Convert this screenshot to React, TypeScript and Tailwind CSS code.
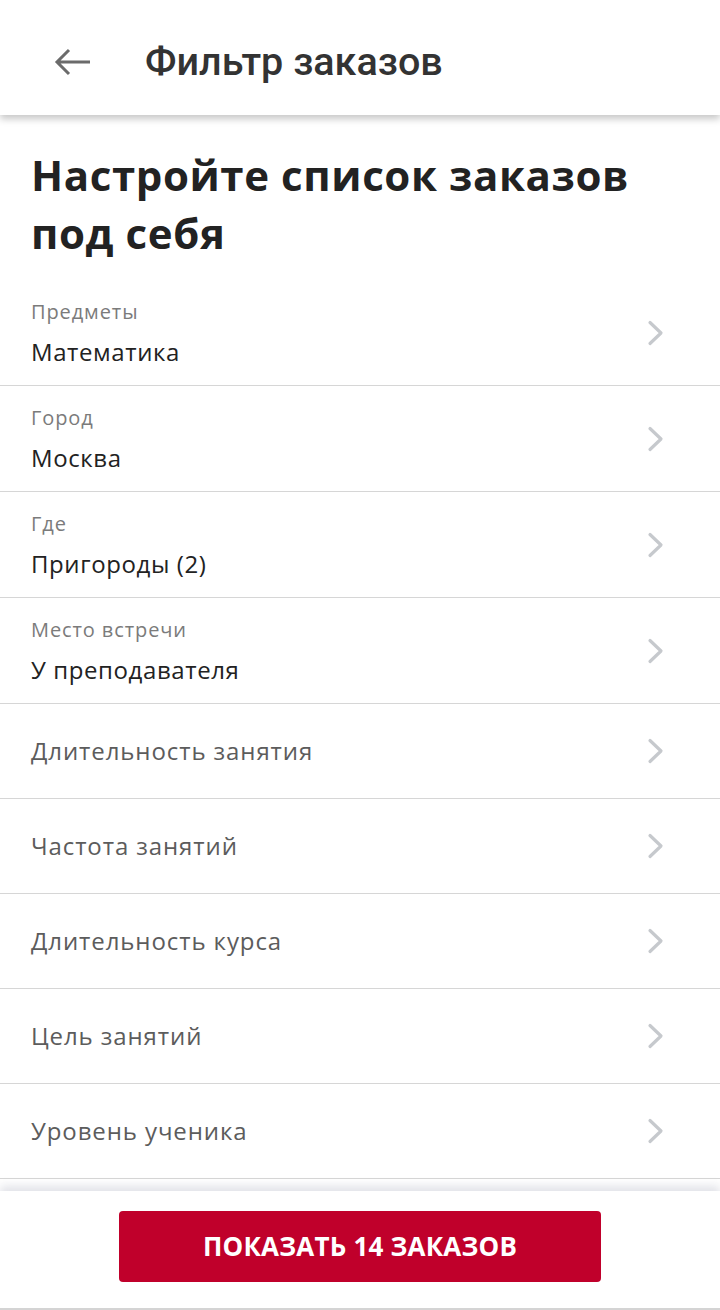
import { ReactNode } from 'react';

type FilterRow = {
  label: string;
  value?: string;
};

const rows: FilterRow[] = [
  { label: 'Предметы', value: 'Математика' },
  { label: 'Город', value: 'Москва' },
  { label: 'Где', value: 'Пригороды (2)' },
  { label: 'Место встречи', value: 'У преподавателя' },
  { label: 'Длительность занятия' },
  { label: 'Частота занятий' },
  { label: 'Длительность курса' },
  { label: 'Цель занятий' },
  { label: 'Уровень ученика' },
];

const Chevron = () => (
  <svg width="18" height="26" viewBox="0 0 18 26" fill="none" className="shrink-0">
    <path d="M3 2.5 L14 13 L3 23.5" stroke="#c6c9cd" strokeWidth="3.2" strokeLinecap="round" strokeLinejoin="round" />
  </svg>
);

const Row = ({ children, tall }: { children: ReactNode; tall: boolean }) => (
  <div
    className={`flex items-center justify-between border-b border-[#d6d6d6] pl-[31px] pr-[55px] ${
      tall ? 'h-[106px]' : 'h-[95px]'
    }`}
  >
    {children}
    <Chevron />
  </div>
);

const App = () => {
  return (
    <div className="flex h-[1310px] w-[720px] flex-col overflow-hidden bg-white font-['Open_Sans',sans-serif]">
      {/* top bar */}
      <header className="relative z-10 flex h-[115px] shrink-0 items-center bg-white pt-[9px] shadow-[0_4px_7px_rgba(0,0,0,0.22)]">
        <button className="ml-[54px] flex h-[34px] w-[38px] items-center justify-center">
          <svg width="38" height="30" viewBox="0 0 38 30" fill="none">
            <path d="M36 15 H3 M15 3 L3 15 L15 27" stroke="#6b6b6b" strokeWidth="3" strokeLinejoin="miter" />
          </svg>
        </button>
        <h1 className="ml-[53px] font-['Roboto',sans-serif] text-[39.5px] font-medium leading-none text-[#333333]">
          Фильтр заказов
        </h1>
      </header>

      <main className="flex-1 overflow-hidden">
        <h2 className="pl-[31px] pr-[30px] pt-[31px] pb-[18px] text-[42px] font-bold leading-[58px] tracking-[0.6px] text-[#222222]">
          Настройте список заказов под себя
        </h2>

        {rows.map((row) =>
          row.value ? (
            <Row key={row.label} tall>
              <div className="flex flex-col">
                <span className="text-[20px] leading-[24px] tracking-[0.9px] text-[#7b7b7b]">{row.label}</span>
                <span className="mt-[14px] text-[24px] leading-[28px] tracking-[0.6px] text-[#222222]">{row.value}</span>
              </div>
            </Row>
          ) : (
            <Row key={row.label} tall={false}>
              <span className="text-[24px] leading-[28px] tracking-[0.9px] text-[#5c5c5c]">{row.label}</span>
            </Row>
          ),
        )}
      </main>

      {/* bottom action */}
      <footer className="relative z-10 flex h-[119px] shrink-0 justify-center border-b-2 border-[#d4d4d4] bg-white pt-[20px] shadow-[0_-5px_9px_rgba(20,30,80,0.13)]">
        <button className="h-[71px] w-[482px] rounded-[4px] bg-[#c0002b] text-[26px] font-bold uppercase tracking-[0.2px] text-white">
          Показать 14 заказов
        </button>
      </footer>
    </div>
  );
};

export default App;
